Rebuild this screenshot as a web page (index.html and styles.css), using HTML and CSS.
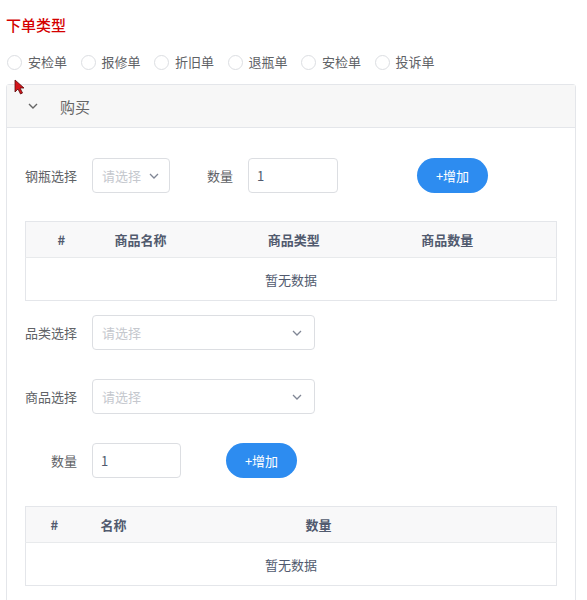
FILE: index.html
```html
<!DOCTYPE html>
<html>
<head>
  <meta charset="utf-8">
  <title>下单</title>
  <link rel="stylesheet" href="styles.css">
</head>
<body>
  <div class="page">
    <h3 class="title">下单类型</h3>

    <div class="radio-group">
      <label class="radio"><span class="radio-inner"></span>安检单</label>
      <label class="radio"><span class="radio-inner"></span>报修单</label>
      <label class="radio"><span class="radio-inner"></span>折旧单</label>
      <label class="radio"><span class="radio-inner"></span>退瓶单</label>
      <label class="radio"><span class="radio-inner"></span>安检单</label>
      <label class="radio"><span class="radio-inner"></span>投诉单</label>
    </div>

    <div class="collapse">
      <div class="collapse-header">
        <svg class="arrow" width="10" height="6" viewBox="0 0 10 6"><path d="M1 1l4 4 4-4" fill="none" stroke="#666" stroke-width="1.4"/></svg>
        <span>购买</span>
      </div>

      <div class="collapse-content">
        <!-- 钢瓶 -->
        <div class="form-row">
          <label class="form-label">钢瓶选择</label>
          <div class="select select-small">
            <span class="placeholder">请选择</span>
            <svg width="10" height="6" viewBox="0 0 10 6"><path d="M1 1l4 4 4-4" fill="none" stroke="#808695" stroke-width="1.3"/></svg>
          </div>
          <label class="form-label label-gap">数量</label>
          <input class="input input-num" type="text" value="1">
          <span class="form-label label-gap"></span>
          <button class="btn btn-add1">+增加</button>
        </div>

        <table class="table table-goods">
          <thead>
            <tr>
              <th class="col-index">#</th>
              <th>商品名称</th>
              <th>商品类型</th>
              <th>商品数量</th>
            </tr>
          </thead>
          <tbody>
            <tr><td class="empty" colspan="4">暂无数据</td></tr>
          </tbody>
        </table>

        <!-- 商品 -->
        <div class="form-row row-cat">
          <label class="form-label">品类选择</label>
          <div class="select select-wide">
            <span class="placeholder">请选择</span>
            <svg width="10" height="6" viewBox="0 0 10 6"><path d="M1 1l4 4 4-4" fill="none" stroke="#808695" stroke-width="1.3"/></svg>
          </div>
        </div>

        <div class="form-row row-goods">
          <label class="form-label">商品选择</label>
          <div class="select select-wide">
            <span class="placeholder">请选择</span>
            <svg width="10" height="6" viewBox="0 0 10 6"><path d="M1 1l4 4 4-4" fill="none" stroke="#808695" stroke-width="1.3"/></svg>
          </div>
        </div>

        <div class="form-row row-goods">
          <label class="form-label">数量</label>
          <input class="input input-num2" type="text" value="1">
          <button class="btn btn-add2">+增加</button>
        </div>

        <table class="table table-items">
          <thead>
            <tr>
              <th class="col-index">#</th>
              <th class="col-name">名称</th>
              <th>数量</th>
            </tr>
          </thead>
          <tbody>
            <tr><td class="empty" colspan="3">暂无数据</td></tr>
          </tbody>
        </table>
      </div>
    </div>

    <svg class="cursor" width="10" height="16" viewBox="0 0 10 16"><path d="M1 1v12l3-3 2.5 5 2-1-2.5-5h4z" fill="#d4151b" stroke="#5a0a0a" stroke-width="0.8"/></svg>
  </div>
</body>
</html>
```

FILE: styles.css
```css
body {
  margin: 0;
  background: #fff;
  font-family: "Noto Sans CJK SC", "Noto Sans", sans-serif;
  font-size: 13px;
  color: #606266;
}

.page {
  position: relative;
  padding: 0 11px 0 6px;
}

.title {
  margin: 15px 0 17px;
  font-size: 15px;
  line-height: 20px;
  font-weight: 500;
  color: #d40000;
}

/* radios */
.radio-group {
  display: flex;
  height: 20px;
  align-items: center;
}

.radio {
  display: flex;
  align-items: center;
  margin-right: 12.5px;
  line-height: 20px;
  color: #606266;
}

.radio-inner {
  width: 13px;
  height: 13px;
  margin: 0 6px 0 1px;
  border: 1px solid #dcdee2;
  border-radius: 50%;
  background: #fff;
}

/* collapse */
.collapse {
  margin-top: 12px;
  border: 1px solid #e4e6ea;
  border-radius: 3px 3px 0 0;
}

.collapse-header {
  display: flex;
  align-items: center;
  height: 42px;
  background: #f7f7f7;
  border-bottom: 1px solid #e4e6ea;
  font-size: 15px;
  color: #666;
}

.collapse-header .arrow {
  margin: 0 22px 0 21px;
}

.collapse-content {
  padding: 30px 18px 14px 18px;
}

/* form rows */
.form-row {
  display: flex;
  align-items: center;
  height: 35px;
}

.row-cat {
  margin-top: 14px;
}

.row-goods {
  margin-top: 29px;
}

.form-label {
  width: 52px;
  padding-right: 15px;
  text-align: right;
  color: #606266;
  flex-shrink: 0;
}

.label-gap {
  margin-left: 11px;
}

.select {
  box-sizing: border-box;
  height: 35px;
  display: flex;
  align-items: center;
  justify-content: space-between;
  padding: 0 12px 0 9px;
  border: 1px solid #dcdee2;
  border-radius: 4px;
  background: #fff;
}

.select-small {
  width: 78px;
  padding-right: 10px;
}

.select-wide {
  width: 223px;
}

.placeholder {
  color: #c5c8ce;
}

.input {
  box-sizing: border-box;
  height: 35px;
  padding: 0 8px;
  border: 1px solid #dcdee2;
  border-radius: 4px;
  font-family: inherit;
  font-size: 13px;
  color: #515a6e;
  outline: none;
}

.input-num {
  width: 90px;
}

.input-num2 {
  width: 89px;
}

.btn {
  width: 71px;
  height: 35px;
  padding: 0;
  border: none;
  border-radius: 18px;
  background: #2d8cf0;
  color: #fff;
  font-family: inherit;
  font-size: 13px;
  cursor: pointer;
}

.btn-add1 {
  margin-left: 1px;
}

.btn-add2 {
  margin-left: 45px;
}

/* tables */
.table {
  width: 100%;
  border-collapse: collapse;
  border: 1px solid #e4e6ea;
  table-layout: fixed;
}

.table-goods {
  margin-top: 28px;
}

.table-items {
  margin-top: 28px;
}

.table th {
  box-sizing: border-box;
  height: 36px;
  padding: 0 0 0 18px;
  background: #f8f8f9;
  border-bottom: 1px solid #e8eaec;
  text-align: left;
  font-weight: bold;
  color: #515a6e;
}

.table th.col-index {
  padding: 0;
  text-align: center;
}

.table-goods .col-index {
  width: 71px;
}

.table-items .col-index {
  width: 57px;
}

.table-items .col-name {
  width: 205px;
}

.table td.empty {
  box-sizing: border-box;
  height: 43px;
  padding: 0;
  text-align: center;
  color: #515a6e;
}

.cursor {
  position: absolute;
  left: 14px;
  top: 64px;
}
```
